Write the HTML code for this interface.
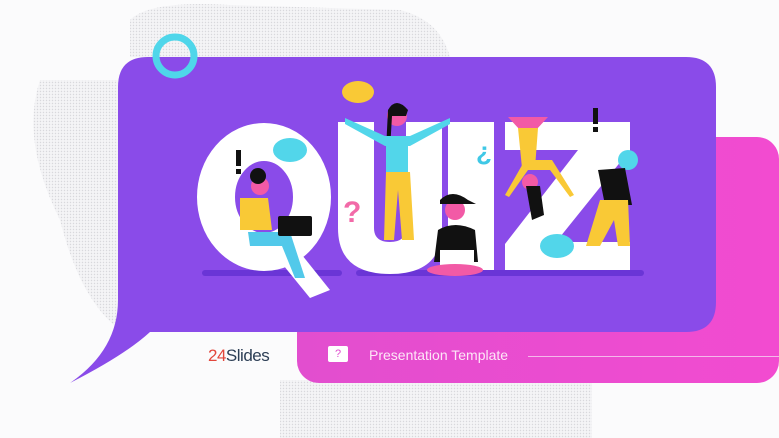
<!DOCTYPE html>
<html><head><meta charset="utf-8"><style>
html,body{margin:0;padding:0}
body{width:779px;height:438px;overflow:hidden;background:#fbfbfc;font-family:"Liberation Sans",sans-serif;position:relative}
</style></head><body>
<svg width="779" height="438" viewBox="0 0 779 438" style="position:absolute;left:0;top:0">
<defs>
<pattern id="dots" width="3" height="3" patternUnits="userSpaceOnUse"><rect width="3" height="3" fill="#f4f4f6"/><circle cx="1.5" cy="1.5" r="0.7" fill="#d8d8dc"/></pattern>
<linearGradient id="pk" x1="0" x2="1"><stop offset="0" stop-color="#e24ecf"/><stop offset="1" stop-color="#f24bd0"/></linearGradient>
</defs>
<path d="M130 20 Q150 0 230 5 L400 10 Q440 20 450 57 L130 57 Z" fill="url(#dots)"/>
<path d="M40 80 Q20 140 60 220 Q80 300 120 330 L118 80 Z" fill="url(#dots)"/>
<rect x="280" y="380" width="312" height="58" fill="url(#dots)"/>
<rect x="297" y="137" width="482" height="246" rx="22" fill="url(#pk)"/>
<path d="M148 57 H686 Q716 57 716 87 V302 Q716 332 686 332 H150 Q125 355 70 383 Q118 350 118 300 V87 Q118 57 148 57 Z" fill="#8a4be9"/>
<circle cx="175" cy="56" r="19" fill="none" stroke="#4fd6ea" stroke-width="7"/>
<rect x="202" y="270" width="140" height="6" rx="3" fill="#6a35d6"/>
<rect x="356" y="270" width="288" height="6" rx="3" fill="#6a35d6"/>
<!-- Q -->
<ellipse cx="264" cy="197" rx="48" ry="55" fill="none" stroke="#fff" stroke-width="38"/>
<path d="M290 240 L330 290 L310 298 L275 255 Z" fill="#fff"/>
<!-- U -->
<path d="M338 122 H374 V228 Q374 242 390 242 Q406 242 406 228 V122 H442 V228 Q442 274 390 274 Q338 274 338 228 Z" fill="#fff"/>
<rect x="448" y="122" width="46" height="148" fill="#fff"/>
<path d="M505 122 H630 V150 L556 242 H630 V270 H505 V244 L578 150 H505 Z" fill="#fff"/>
<ellipse cx="358" cy="92" rx="16" ry="11" fill="#f9c936"/>
<ellipse cx="290" cy="150" rx="17" ry="12" fill="#52d6ea"/>
<ellipse cx="557" cy="246" rx="17" ry="12" fill="#52d6ea"/>
<rect x="236" y="150" width="5" height="16" fill="#111"/><rect x="236" y="169" width="5" height="5" fill="#111"/>
<rect x="593" y="108" width="5" height="16" fill="#111"/><rect x="593" y="127" width="5" height="5" fill="#111"/>
<text x="343" y="222" font-size="30" font-weight="bold" fill="#f26aa8">?</text>
<text x="476" y="160" font-size="26" font-weight="bold" fill="#3fc8e6">¿</text>
<circle cx="260" cy="186" r="9" fill="#f25aa6"/><circle cx="258" cy="176" r="8" fill="#111"/>
<path d="M240 198 H268 L272 230 H240 Z" fill="#f9c936"/>
<path d="M248 232 H290 L305 278 H295 L282 246 H250 Z" fill="#52c9ea"/>
<rect x="278" y="216" width="34" height="20" rx="2" fill="#111"/>
<path d="M345 118 L385 136 L410 136 L450 118 L450 124 L410 146 L385 146 L345 124Z" fill="#52d6ea"/>
<circle cx="397" cy="116" r="10" fill="#f25aa6"/><path d="M388 110 Q396 96 408 110 L406 116 L392 116 L390 150 L386 150Z" fill="#111"/>
<rect x="386" y="136" width="22" height="38" fill="#52d6ea"/>
<path d="M386 172 H410 L414 240 H402 L398 190 L394 240 H384Z" fill="#f9c936"/>
<circle cx="455" cy="210" r="10" fill="#f25aa6"/><path d="M440 200 Q452 188 468 200 L476 204 H440Z" fill="#111"/>
<path d="M438 230 Q455 220 475 230 L478 262 H434Z" fill="#111"/>
<rect x="440" y="250" width="34" height="18" fill="#fff"/>
<ellipse cx="455" cy="270" rx="28" ry="6" fill="#f25aa6"/>
<path d="M508 117 H548 L536 130 H520Z" fill="#f25aa6"/>
<path d="M518 128 H538 L535 168 H522Z" fill="#f9c936"/>
<path d="M525 160 L505 195 L509 197 L528 170 L550 170 L570 197 L574 195 L552 160Z" fill="#f9c936"/>
<circle cx="530" cy="182" r="8" fill="#f25aa6"/><path d="M526 186 L540 186 L544 215 L532 220Z" fill="#111"/>
<circle cx="628" cy="160" r="10" fill="#52d6ea"/>
<path d="M598 170 L625 168 L632 205 L605 205Z" fill="#111"/>
<path d="M600 200 H628 L630 246 H618 L614 220 L600 246 H586Z" fill="#f9c936"/>
</svg>
<div style="position:absolute;left:208px;top:346px;font-size:17px;color:#2c3e55;letter-spacing:-0.5px"><span style="color:#e2473c">24</span>Slides</div>
<div style="position:absolute;left:328px;top:346px;width:20px;height:16px;background:#fff;border-radius:2px;color:#e04fcf;font-size:11px;text-align:center;line-height:16px">?</div>
<div style="position:absolute;left:369px;top:347px;font-size:14px;color:#fde6f7">Presentation Template</div>
<div style="position:absolute;left:528px;top:356px;width:251px;height:1px;background:#f5b8ea"></div>
</body></html>
